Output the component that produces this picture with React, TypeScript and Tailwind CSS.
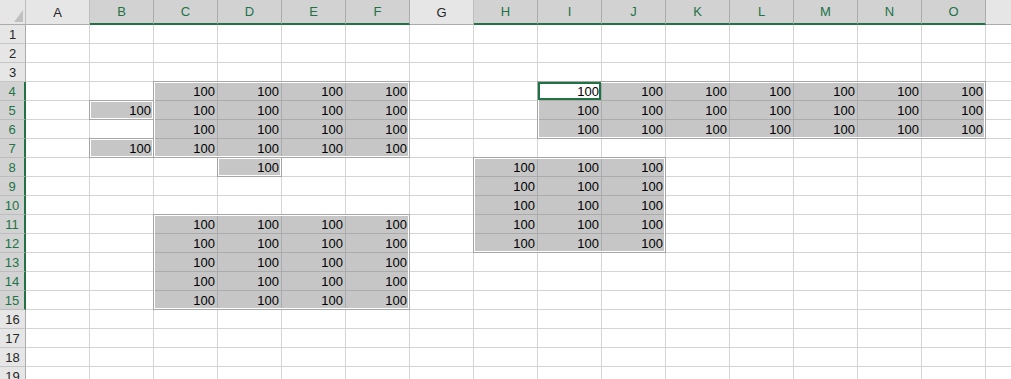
import React from 'react';

// column index: A=0 ... O=14, rows are 1-based like the sheet
type Range = [number, number, number, number];

const COLS = 'ABCDEFGHIJKLMNO'.split('');
const ROW_COUNT = 19;

const RANGES: Range[] = [
  [2, 4, 5, 7],
  [1, 5, 1, 5],
  [1, 7, 1, 7],
  [3, 8, 3, 8],
  [2, 11, 5, 15],
  [8, 4, 14, 6],
  [7, 8, 9, 12],
];

const ACTIVE = { col: 8, row: 4 };

const inRange = (c: number, r: number) =>
  RANGES.some(([c1, r1, c2, r2]) => c >= c1 && c <= c2 && r >= r1 && r <= r2);

const colSelected = (c: number) => RANGES.some(([c1, , c2]) => c >= c1 && c <= c2);
const rowSelected = (r: number) => RANGES.some(([, r1, , r2]) => r >= r1 && r <= r2);

const Corner = () => (
  <div className="relative h-[25px] bg-[#e6e6e6] border-r border-b border-r-[#bdbdbd] border-b-[#ababab]">
    <svg className="absolute left-[14px] top-[10px]" width="9" height="12" viewBox="0 0 9 12">
      <polygon points="9,0 9,12 0,12" fill="#c0c0c0" />
    </svg>
  </div>
);

const ColHeader: React.FC<{ label: string; selected: boolean }> = ({ label, selected }) => (
  <div
    className={
      selected
        ? 'h-[25px] flex items-center justify-center bg-[#d2d2d2] text-[#217346] border-r border-r-[#ababab] border-b-2 border-b-[#217346]'
        : 'h-[25px] flex items-center justify-center bg-[#e6e6e6] text-[#262626] border-r border-r-[#bdbdbd] border-b border-b-[#ababab]'
    }
  >
    {label}
  </div>
);

const RowHeader: React.FC<{ num: number; selected: boolean }> = ({ num, selected }) => (
  <div
    className={
      selected
        ? 'h-[19px] flex items-center justify-center bg-[#d2d2d2] text-[#217346] border-b border-b-[#bdbdbd] border-r-2 border-r-[#217346]'
        : 'h-[19px] flex items-center justify-center bg-[#e6e6e6] text-[#262626] border-b border-b-[#c6c6c6] border-r border-r-[#ababab]'
    }
  >
    {num}
  </div>
);

const Cell: React.FC<{ c: number; r: number }> = ({ c, r }) => {
  const sel = inRange(c, r);
  const active = c === ACTIVE.col && r === ACTIVE.row;
  let cls = 'h-[19px] flex items-center justify-end pr-[2px] border-r border-b ';
  if (active) cls += 'bg-white border-[#ababab]';
  else if (sel) cls += 'bg-[#c6c6c6] border-[#ababab]';
  else cls += 'bg-white border-[#d4d4d4]';
  return <div className={cls}>{sel ? '100' : ''}</div>;
};

export default function App() {
  const rows = Array.from({ length: ROW_COUNT }, (_, i) => i + 1);

  return (
    <div className="relative w-[1011px] h-[379px] overflow-hidden bg-white font-['Liberation_Sans',Arial,sans-serif] text-[13px] leading-none text-black">
      <div className="grid grid-cols-[26px_repeat(15,64px)_1fr] grid-rows-[25px_repeat(19,19px)]">
        <Corner />
        {COLS.map((l, c) => (
          <ColHeader key={l} label={l} selected={colSelected(c)} />
        ))}
        <div className="h-[25px] bg-[#e6e6e6] border-b border-b-[#ababab]" />

        {rows.map((r) => (
          <React.Fragment key={r}>
            <RowHeader num={r} selected={rowSelected(r)} />
            {COLS.map((l, c) => (
              <Cell key={l} c={c} r={r} />
            ))}
            <div className="h-[19px] border-b border-[#d4d4d4]" />
          </React.Fragment>
        ))}
      </div>

      {/* selection outlines */}
      {RANGES.map(([c1, r1, c2, r2], i) => (
        <div
          key={i}
          className="absolute pointer-events-none border border-[#a6a6a6] shadow-[inset_0_0_0_1px_#ffffff]"
          style={{
            left: 25 + 64 * c1,
            top: 24 + 19 * (r1 - 1),
            width: 64 * (c2 - c1 + 1) + 1,
            height: 19 * (r2 - r1 + 1) + 1,
          }}
        />
      ))}

      {/* active cell */}
      <div
        className="absolute pointer-events-none border-2 border-[#217346]"
        style={{
          left: 26 + 64 * ACTIVE.col,
          top: 25 + 19 * (ACTIVE.row - 1),
          width: 63,
          height: 18,
        }}
      />
    </div>
  );
}
